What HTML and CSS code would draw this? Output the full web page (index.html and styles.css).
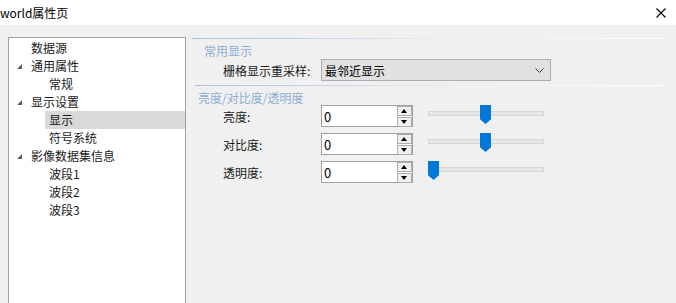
FILE: index.html
```html
<!DOCTYPE html>
<html lang="zh-CN">
<head>
    <meta charset="UTF-8">
    <title>world属性页</title>
    <link rel="stylesheet" href="styles.css">
</head>
<body>
    <div class="titlebar">
        <span class="title">world属性页</span>
        <svg class="close" width="10" height="10" viewBox="0 0 10 10">
            <path d="M0.5 0.5 L9.5 9.5 M9.5 0.5 L0.5 9.5" stroke="#000" stroke-width="1.1" fill="none"/>
        </svg>
    </div>

    <div class="main">
        <!-- 左侧树 -->
        <div class="tree">
            <div class="node lv1">数据源</div>
            <div class="node lv1"><span class="arrow"></span>通用属性</div>
            <div class="node lv2">常规</div>
            <div class="node lv1"><span class="arrow"></span>显示设置</div>
            <div class="node lv2"><span class="sel">显示</span></div>
            <div class="node lv2">符号系统</div>
            <div class="node lv1"><span class="arrow"></span>影像数据集信息</div>
            <div class="node lv2">波段1</div>
            <div class="node lv2">波段2</div>
            <div class="node lv2">波段3</div>
        </div>

        <!-- 右侧属性 -->
        <div class="pane">
            <div class="sep"></div>
            <div class="group-title">常用显示</div>
            <div class="row">
                <span class="label">栅格显示重采样:</span>
                <div class="combo">
                    <span>最邻近显示</span>
                    <svg width="9" height="5" viewBox="0 0 9 5">
                        <path d="M0.5 0.5 L4.5 4.5 L8.5 0.5" stroke="#404040" stroke-width="1" fill="none"/>
                    </svg>
                </div>
            </div>

            <div class="sep sep2"></div>
            <div class="group-title g2">亮度/对比度/透明度</div>

            <div class="row">
                <span class="label">亮度:</span>
                <div class="spin">
                    <span class="value">0</span>
                    <div class="spin-btns"><span class="up"></span><span class="down"></span></div>
                </div>
                <div class="slider"><div class="track"></div><span class="thumb" style="left: 52px"></span></div>
            </div>
            <div class="row">
                <span class="label">对比度:</span>
                <div class="spin">
                    <span class="value">0</span>
                    <div class="spin-btns"><span class="up"></span><span class="down"></span></div>
                </div>
                <div class="slider"><div class="track"></div><span class="thumb" style="left: 52px"></span></div>
            </div>
            <div class="row">
                <span class="label">透明度:</span>
                <div class="spin">
                    <span class="value">0</span>
                    <div class="spin-btns"><span class="up"></span><span class="down"></span></div>
                </div>
                <div class="slider"><div class="track"></div><span class="thumb" style="left: 0px"></span></div>
            </div>
        </div>
    </div>
</body>
</html>
```

FILE: styles.css
```css
body {
    margin: 0;
    padding: 0;
    background-color: #f0f0f0;
    font-family: 'Noto Sans CJK SC', 'Microsoft YaHei', sans-serif;
    font-size: 12px;
    color: #1a1a1a;
    overflow: hidden;
    height: 303px;
}

.titlebar {
    height: 25px;
    background-color: #fff;
    display: flex;
    align-items: center;
    justify-content: space-between;
}

.title {
    font-size: 12px;
    color: #000;
    line-height: 25px;
}

.close {
    margin-right: 10px;
}

.main {
    display: flex;
    padding: 12px 0 0 8px;
}

.tree {
    width: 176px;
    height: 265px;
    background-color: #fff;
    border: 1px solid #a0a0a0;
    border-bottom: none;
    padding-top: 1px;
}

.node {
    height: 18px;
    line-height: 18px;
    position: relative;
    white-space: nowrap;
}

.node.lv1 {
    padding-left: 22px;
}

.node.lv2 {
    padding-left: 40px;
}

.node.lv2 .sel {
    display: block;
    margin-left: -4px;
    padding-left: 4px;
    background-color: #d9d9d9;
}

.arrow {
    position: absolute;
    left: 8px;
    top: 7px;
    width: 0;
    height: 0;
    border-left: 5px solid transparent;
    border-bottom: 5px solid #606060;
}

.pane {
    width: 472px;
    margin-left: 6px;
    padding-top: 1px;
}

.sep {
    height: 1px;
    background: linear-gradient(to right, #a6bfdb, #e8eef6 55%, #ffffff);
}

.sep.sep2 {
    margin-left: 3px;
    margin-top: -2px;
}

.group-title {
    color: #8eaed2;
    padding: 4px 0 0 12px;
    line-height: 16px;
    height: 16px;
}

.group-title.g2 {
    padding: 5px 0 0 6px;
    line-height: 14px;
    height: 14px;
}

.row {
    display: flex;
    align-items: center;
    height: 22px;
    margin-bottom: 6px;
}

.label {
    width: 98px;
    margin-left: 31px;
    flex-shrink: 0;
}

.combo {
    width: 230px;
    height: 22px;
    box-sizing: border-box;
    border: 1px solid #adadad;
    background-color: #e1e1e1;
    display: flex;
    align-items: center;
    justify-content: space-between;
    padding: 0 6px 0 3px;
    color: #000;
}

.spin {
    width: 92px;
    height: 22px;
    box-sizing: border-box;
    border: 1px solid #a0a0a0;
    background-color: #fff;
    display: flex;
    align-items: center;
    justify-content: space-between;
    padding-left: 2px;
}

.value {
    color: #000;
    font-size: 13px;
}

.spin-btns {
    display: flex;
    flex-direction: column;
    gap: 1px;
}

.spin-btns span {
    width: 13px;
    height: 8px;
    border: 1px solid #adadad;
    background-color: #f0f0f0;
    position: relative;
}

.spin-btns span::after {
    content: '';
    position: absolute;
    left: 3px;
    width: 0;
    height: 0;
    border-left: 3.5px solid transparent;
    border-right: 3.5px solid transparent;
}

.spin-btns .up::after {
    top: 2px;
    border-bottom: 4px solid #000;
}

.spin-btns .down::after {
    top: 2px;
    border-top: 4px solid #000;
}

.slider {
    position: relative;
    width: 116px;
    height: 22px;
    margin-left: 15px;
}

.track {
    margin-top: 6px;
    height: 3px;
    background-color: #e7e7e7;
    border: 1px solid #d6d6d6;
}

.thumb {
    position: absolute;
    top: 0;
    width: 11px;
    height: 19px;
    background-color: #0078d7;
    clip-path: polygon(0 0, 100% 0, 100% 75%, 50% 100%, 0 75%);
}
```
